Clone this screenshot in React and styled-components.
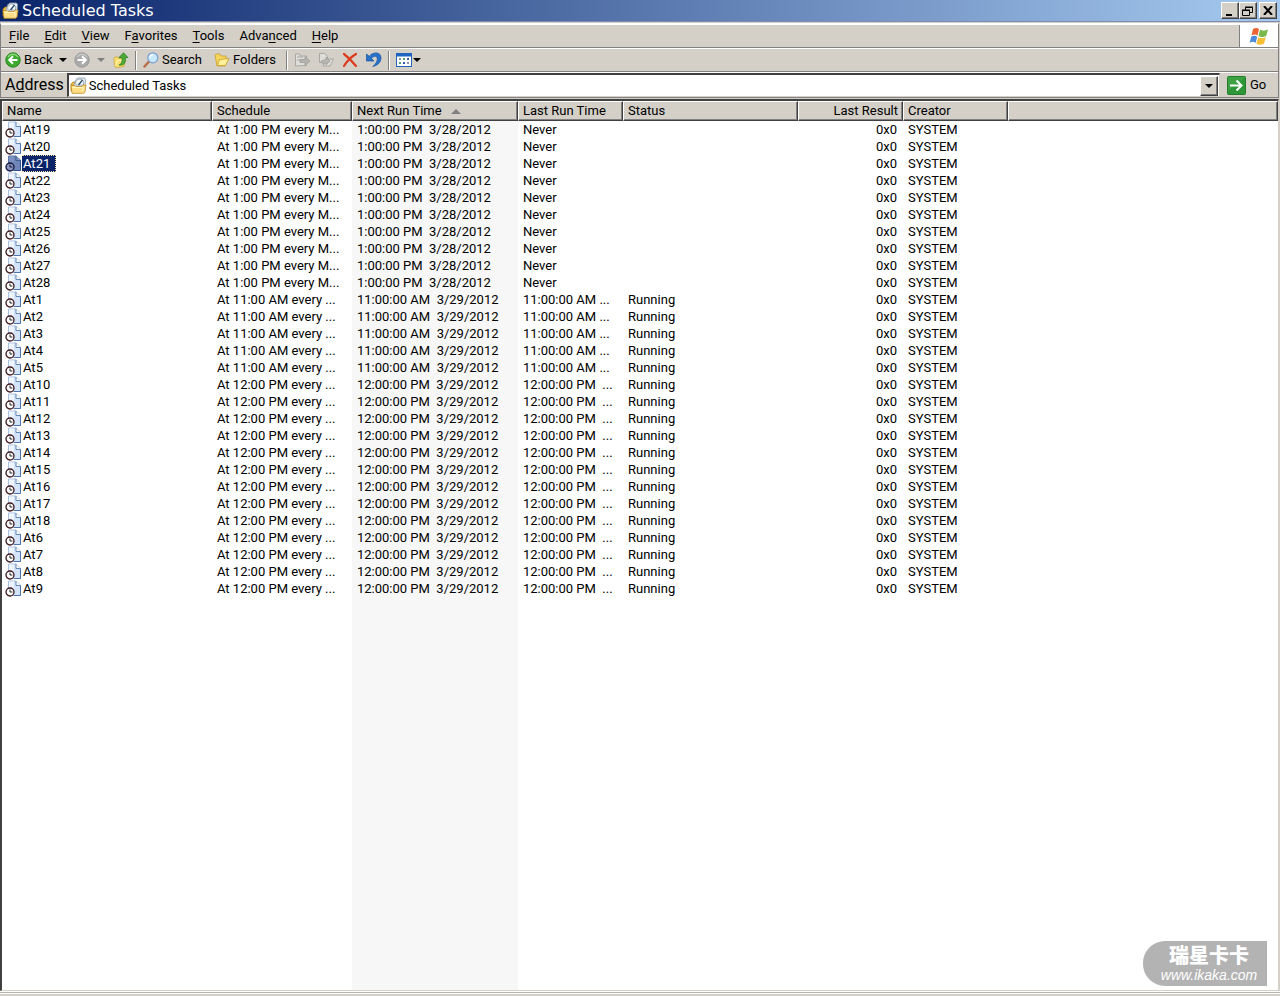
import React, { useState } from 'react';
import styled, { createGlobalStyle } from 'styled-components';

const GlobalStyle = createGlobalStyle`
  * { box-sizing: border-box; }
  body { margin: 0; background: #d4d0c8; color: #000; font: 13px/16px Roboto, "Liberation Sans", sans-serif; }
  button, input { font: inherit; color: inherit; }
  button { cursor: default; }
  svg { flex-shrink: 0; }
`;

const Window = styled.div`
  min-height: 100vh;
  display: flex;
  flex-direction: column;
`;

const TitleBar = styled.header`
  height: 22px;
  display: flex;
  align-items: center;
  gap: 3px;
  padding: 0 3px 0 2px;
  background: linear-gradient(90deg, #0a246a, #a6caf0);
  border-bottom: 1px solid #808cb0;
`;

const Title = styled.h1`
  flex: 1;
  margin: 0;
  color: #fff;
  font: 16px/20px "DejaVu Sans", sans-serif;
`;

const Captions = styled.div`
  display: flex;
`;

const CaptionButton = styled.button`
  width: 18px;
  height: 17px;
  padding: 0;
  display: grid;
  place-items: center;
  background: #d4d0c8;
  border: 1px solid;
  border-color: #fff #404040 #404040 #fff;
  box-shadow: inset -1px -1px #808080;
  margin-left: ${(p) => (p.$apart ? 2 : 0)}px;
`;

const Bars = styled.div`
  margin: 1px 1px 0 0;
  border: 1px solid #808080;
  border-top-color: #fff;
  border-bottom: 0;
`;

const Bar = styled.div`
  height: ${(p) => p.$height}px;
  display: flex;
  align-items: center;
  border-top: 1px solid #fff;
  border-bottom: 1px solid #808080;
`;

const MenuList = styled.nav`
  flex: 1;
  display: flex;
`;

const MenuButton = styled.button`
  padding: 0 7px 0 8px;
  border: 0;
  background: none;
  u { text-underline-offset: 2px; }
`;

const Brand = styled.div`
  align-self: stretch;
  width: 39px;
  display: grid;
  place-items: center;
  background: #fff;
  border-left: 1px solid #808080;
`;

const ToolButton = styled.button`
  display: flex;
  align-items: center;
  justify-content: ${(p) => (p.$label ? 'flex-start' : 'center')};
  gap: ${(p) => (p.$tight ? 1 : 3)}px;
  width: ${(p) => p.$width}px;
  height: 22px;
  padding: 0 ${(p) => (p.$label ? 4 : 0)}px;
  border: 0;
  background: none;
  white-space: nowrap;
`;

const Separator = styled.span`
  width: 2px;
  height: 19px;
  margin: 0 2px;
  border-left: 1px solid #808080;
  border-right: 1px solid #fff;
`;

const AddressLabel = styled.label`
  padding: 0 3px 0 4px;
  font-size: 16px;
`;

const AddressBox = styled.div`
  flex: 1;
  height: 24px;
  display: flex;
  align-items: center;
  padding: 0 1px;
  background: #fff;
  border: 1px solid #d4d0c8;
  border-top: 2px solid #404040;
  border-left: 2px solid #404040;
`;

const AddressInput = styled.input`
  flex: 1;
  min-width: 0;
  padding: 0 2px;
  border: 0;
  outline: 0;
  background: none;
`;

const DropButton = styled(CaptionButton)`
  height: 20px;
`;

const GoButton = styled.button`
  display: flex;
  align-items: center;
  gap: 4px;
  width: 58px;
  padding: 0 0 0 7px;
  border: 0;
  background: none;
`;

const ListView = styled.main`
  flex: 1;
  margin: 1px 1px 0 0;
  border: 1px solid #d4d0c8;
  border-top: 2px solid #404040;
  border-left: 2px solid #404040;
  background: linear-gradient(#f7f7f7, #f7f7f7) 350px 0 / 166px 100% no-repeat #fff;
`;

const FootLine = styled.div`
  height: 5px;
  border-top: 1px solid #fff;
  box-shadow: inset 0 1px #b8b5ae, inset 0 2px #fff;
`;

const Table = styled.table`
  width: 100%;
  table-layout: fixed;
  border-collapse: separate;
  border-spacing: 0;
`;

const Column = styled.col`
  width: ${(p) => (p.$width ? `${p.$width}px` : 'auto')};
`;

const HeadCell = styled.th`
  height: 20px;
  padding: 0;
  font-weight: 400;
  background: #d4d0c8;
  border: 1px solid;
  border-color: #fff #404040 #404040 #fff;
  box-shadow: inset -1px -1px #808080;
`;

const HeadButton = styled.button`
  display: flex;
  align-items: center;
  justify-content: ${(p) => (p.$right ? 'flex-end' : 'flex-start')};
  gap: 9px;
  width: 100%;
  padding: 0 4px;
  border: 0;
  background: none;
  white-space: nowrap;
`;

const Cell = styled.td`
  height: 17px;
  padding: 0 6px 0 5px;
  line-height: 17px;
  white-space: pre;
  overflow: hidden;
  text-align: ${(p) => (p.$right ? 'right' : 'left')};
`;

const NameCell = styled(Cell)`
  padding: 0 3px;
`;

const TaskName = styled.span`
  display: flex;
  align-items: center;
  height: 17px;
`;

const TaskLabel = styled.span`
  padding: 0 5px 0 1px;
  margin-left: 1px;
  line-height: 15px;
  border: 1px dotted ${(p) => (p.$selected ? '#f5db95' : 'transparent')};
  border-left-width: 0;
  background: ${(p) => (p.$selected ? '#0a246a' : 'transparent')};
  color: ${(p) => (p.$selected ? '#fff' : '#000')};
`;

const Watermark = styled.aside`
  position: absolute;
  right: 13px;
  bottom: 10px;
  width: 124px;
  height: 45px;
  padding: 2px 9px 0 17px;
  background: #b3b3b3;
  border-radius: 22px 0 0 22px;
  color: #fff;
  text-align: center;
  font: italic 14px/16px "Liberation Sans", sans-serif;
`;

const WatermarkName = styled.strong`
  display: block;
  font: 900 20px/24px "Noto Sans CJK SC", sans-serif;
`;

const Page = styled.div`
  position: relative;
`;

const Caret = ({ color = '#000' }) => (
  <svg width="8" height="4" viewBox="0 0 8 4" aria-hidden="true"><path d="M0 0h8L4 4z" fill={color} /></svg>
);

const TasksIcon = () => (
  <svg width="17" height="17" viewBox="0 0 17 17" aria-hidden="true">
    <path d="M1 7l2-2h3v9H1z" fill="#e9b93b" stroke="#a77716" strokeWidth=".7" />
    <path d="M3.5 9 6 2.5 8 1h6.5l1 1.5L15 10H4z" fill="#e4edf5" stroke="#8a96a8" strokeWidth=".8" />
    <path d="M6 8a4 4 0 0 1 7.5-3.5V8z" fill="#f8fcff" stroke="#7d93a8" strokeWidth=".7" />
    <path d="M8.5 8l4-5" stroke="#284969" strokeWidth="1.3" fill="none" />
    <path d="M1 8.5h4l1 1h6l1-1.5h3l-1 7-1.5 1.3H2z" fill="#ffdf86" stroke="#c08a20" strokeWidth=".8" />
    <path d="M2.5 10.5H13v4" stroke="#fff5c8" fill="none" />
  </svg>
);

const RoundArrow = ({ forward }) => (
  <svg width="16" height="16" viewBox="0 0 16 16" aria-hidden="true">
    <circle cx="8" cy="8" r="7.2" fill={forward ? '#aaa' : '#3ca82e'} stroke={forward ? '#999' : '#278520'} />
    <path d="M3 5a6 6 0 0 1 10 0" fill="none" stroke={forward ? '#c8c8c8' : '#8bd77b'} strokeWidth="1.5" />
    <path d={forward ? 'M3.5 8h8M8 4.2 11.8 8 8 11.8' : 'M12.5 8h-8M8 4.2 4.2 8 8 11.8'} fill="none" stroke="#fff" strokeWidth="2" />
  </svg>
);

const UpIcon = () => (
  <svg width="16" height="16" viewBox="0 0 16 16" aria-hidden="true">
    <path d="M1 6.5L2 5h3l1 1.5h5l1 1-1 7-7 1-2.5-1z" fill="#f8df70" stroke="#cda437" strokeWidth=".8" />
    <path d="M2 14l2.5-5.5H12" fill="none" stroke="#fff4b5" />
    <path d="M6 13c3-1.5 3.5-4 3-7.5H6L10.5.7 15 5.5h-2.7c.7 5-1 8.5-6.3 7.5z" fill="#4cac35" stroke="#227b18" strokeWidth=".7" />
  </svg>
);

const SearchIcon = () => (
  <svg width="16" height="16" viewBox="0 0 16 16" aria-hidden="true">
    <path d="M1.5 14.5 6 9.5" stroke="#b86b45" strokeWidth="2.4" strokeLinecap="round" />
    <circle cx="9.8" cy="5.8" r="5" fill="#c9e9fb" stroke="#7c9dd0" strokeWidth="1.2" />
    <path d="M7 5.5c0-2 1.5-2.6 3-2.5" fill="none" stroke="#fff" strokeWidth="1.5" />
  </svg>
);

const FolderIcon = () => (
  <svg width="16" height="16" viewBox="0 0 16 16" aria-hidden="true">
    <path d="M1 3l1-1h4l1 2h5v3h2l-3 7H3z" fill="#f5d65d" stroke="#c9a030" strokeWidth=".8" />
    <path d="M3.5 13.5l2-6 9.5-1-3.5 7z" fill="#fff09a" stroke="#c79e27" strokeWidth=".8" />
  </svg>
);

const SendIcon = ({ copy }) => (
  <svg width="17" height="16" viewBox="0 0 17 16" aria-hidden="true">
    {copy ? (
      <g fill="#deddda" stroke="#a3a19c" strokeWidth=".9">
        <path d="M1.5 1.5h5l3 3v6h-8zM8 7h7.5L12 14H5z" />
        <path d="M3 9c1 3 3 3 5 2v2l4-4-4-4v2.5C6 8.5 5 8 3 9z" fill="#b8b6b2" />
      </g>
    ) : (
      <g fill="#deddda" stroke="#a3a19c" strokeWidth=".9">
        <path d="M1.5 14V2h4l1 2h6v9.5zM3 5h6M3 8h5" />
        <path d="M6 7.5h5v-3L16 9l-5 4.5v-3H6z" fill="#b5b3af" />
      </g>
    )}
  </svg>
);

const DeleteIcon = () => (
  <svg width="16" height="16" viewBox="0 0 16 16" aria-hidden="true">
    <path d="M2 2c4 3 8 7 12 12M14 2C9 5 5 9 2 14" fill="none" stroke="#dc3c1e" strokeWidth="2.2" strokeLinecap="round" />
  </svg>
);

const UndoIcon = () => (
  <svg width="16" height="16" viewBox="0 0 16 16" aria-hidden="true">
    <path d="M.5 2v7H8L5.5 6.5C8 3.5 11.3 3.5 11.3 7c0 2.5-1.8 5-4.5 7.5 5-1 8.2-4.5 8.2-8.5C15-.5 7-.5 3.2 4.3z" fill="#2871c9" stroke="#1755a4" strokeWidth=".7" />
  </svg>
);

const ViewsIcon = () => (
  <svg width="16" height="14" viewBox="0 0 16 14" aria-hidden="true">
    <rect x=".5" y=".5" width="15" height="13" fill="#fff" stroke="#2465b5" />
    <path d="M0 0h16v3.5H0z" fill="#1d65c0" />
    <path d="M3 5h2v2H3zM11 9h2v2h-2z" fill="#8c96a8" />
    <path d="M7 5h2v2H7zM3 9h2v2H3z" fill="#4c9e70" />
    <path d="M11 5h2v2h-2zM7 9h2v2H7z" fill="#335ba8" />
  </svg>
);

const FlagIcon = () => (
  <svg width="20" height="19" viewBox="0 0 20 19" aria-hidden="true">
    <path d="M4 2c2-1.5 4-1.5 6 0L8.5 8.5c-2-1.5-4-1.3-6 0z" fill="#ed6434" />
    <path d="M11 2.5c2 1.5 5 1.5 8 0L17.2 9c-3 1.5-5.5 1.5-7.7 0z" fill="#79b94b" />
    <path d="M2.2 9.7c2-1.4 4-1.4 6 0L6.6 16c-2-1.6-4-1.4-6 0z" fill="#4b89dd" />
    <path d="M9.2 10.2c2.5 1.5 5 1.5 7.6 0L15 16.7c-3 1.5-5.5 1.5-7.6 0z" fill="#f6bd35" />
  </svg>
);

const GoIcon = () => (
  <svg width="19" height="19" viewBox="0 0 19 19" aria-hidden="true">
    <rect x=".5" y=".5" width="18" height="18" rx="1" fill="#2d9638" stroke="#237e2c" />
    <path d="M1 1h17L1 15z" fill="#58b35a" opacity=".4" />
    <path d="M3 9.5h12M9.5 4.5l5 5-5 5" fill="none" stroke="#fff" strokeWidth="2" />
  </svg>
);

const JobIcon = ({ selected }) => (
  <svg width="16" height="17" viewBox="0 0 16 17" aria-hidden="true">
    <path d="M3.5 1H11l4.5 4v10.5h-12z" fill={selected ? '#6f86b8' : '#d3e3f9'} stroke={selected ? '#5d76aa' : '#a9c0e2'} />
    <path d="M4 1.5h5v6H4z" fill={selected ? '#7d92c0' : '#eef5ff'} />
    <path d="M11 1v4.5h4.5" fill={selected ? '#8299c3' : '#fff'} stroke={selected ? '#435b91' : '#6587b5'} />
    <path d="M15.5 5.5v10H9" fill="none" stroke={selected ? '#304c89' : '#4c74ae'} />
    <circle cx="5" cy="12" r="4" fill={selected ? '#8a96c0' : '#fff'} stroke={selected ? '#15183f' : '#3c171b'} strokeWidth="1.3" />
    <path d="M5 9.5V12h2.4" fill="none" stroke={selected ? '#15183f' : '#222'} />
  </svg>
);

const menus = [['', 'F', 'ile'], ['', 'E', 'dit'], ['', 'V', 'iew'], ['F', 'a', 'vorites'], ['', 'T', 'ools'], ['Adva', 'n', 'ced'], ['', 'H', 'elp']];

const columns = [
  { title: 'Name', width: 210 },
  { title: 'Schedule', width: 140 },
  { title: 'Next Run Time', width: 166, sorted: true },
  { title: 'Last Run Time', width: 105 },
  { title: 'Status', width: 175 },
  { title: 'Last Result', width: 105, right: true },
  { title: 'Creator', width: 105 },
];

const groups = [
  { ids: [19, 20, 21, 22, 23, 24, 25, 26, 27, 28], cells: ['At 1:00 PM every M...', '1:00:00 PM  3/28/2012', 'Never', ''] },
  { ids: [1, 2, 3, 4, 5], cells: ['At 11:00 AM every ...', '11:00:00 AM  3/29/2012', '11:00:00 AM ...', 'Running'] },
  { ids: [10, 11, 12, 13, 14, 15, 16, 17, 18, 6, 7, 8, 9], cells: ['At 12:00 PM every ...', '12:00:00 PM  3/29/2012', '12:00:00 PM  ...', 'Running'] },
];
const tasks = groups.flatMap((g) => g.ids.map((id) => ({ name: `At${id}`, cells: g.cells })));

export default function App() {
  const [selected, setSelected] = useState('At21');
  return (
    <Page>
      <GlobalStyle />
      <Window>
        <TitleBar>
          <TasksIcon />
          <Title>Scheduled Tasks</Title>
          <Captions>
            <CaptionButton aria-label="Minimize">
              <svg width="10" height="10"><path d="M1 8h6v2H1z" /></svg>
            </CaptionButton>
            <CaptionButton aria-label="Restore">
              <svg width="12" height="10"><path d="M3.5 4V1.5h7v5H8M3 1h8M.5 4.5h7v5h-7zM0 4h8" fill="none" stroke="#000" /></svg>
            </CaptionButton>
            <CaptionButton $apart aria-label="Close">
              <svg width="10" height="9"><path d="M1 0l8 9M9 0L1 9" stroke="#000" strokeWidth="2" /></svg>
            </CaptionButton>
          </Captions>
        </TitleBar>
        <Bars>
          <Bar $height={24}>
            <MenuList>
              {menus.map(([before, key, after]) => (
                <MenuButton key={before + key + after}>{before}<u>{key}</u>{after}</MenuButton>
              ))}
            </MenuList>
            <Brand><FlagIcon /></Brand>
          </Bar>
          <Bar $height={24}>
            <ToolButton $width={54} $label><RoundArrow />Back</ToolButton>
            <ToolButton $width={16} aria-label="Back history"><Caret /></ToolButton>
            <ToolButton $width={22} aria-label="Forward"><RoundArrow forward /></ToolButton>
            <ToolButton $width={16} aria-label="Forward history"><Caret color="#808080" /></ToolButton>
            <ToolButton $width={24} aria-label="Up"><UpIcon /></ToolButton>
            <Separator />
            <ToolButton $width={71} $label><SearchIcon />Search</ToolButton>
            <ToolButton $width={74} $label><FolderIcon />Folders</ToolButton>
            <Separator />
            <ToolButton $width={24} aria-label="Move to"><SendIcon /></ToolButton>
            <ToolButton $width={24} aria-label="Copy to"><SendIcon copy /></ToolButton>
            <ToolButton $width={24} aria-label="Delete"><DeleteIcon /></ToolButton>
            <ToolButton $width={24} aria-label="Undo"><UndoIcon /></ToolButton>
            <Separator />
            <ToolButton $width={36} $label $tight aria-label="Views"><ViewsIcon /><Caret /></ToolButton>
          </Bar>
          <Bar $height={26}>
            <AddressLabel htmlFor="address">A<u>d</u>dress</AddressLabel>
            <AddressBox>
              <TasksIcon />
              <AddressInput id="address" defaultValue="Scheduled Tasks" />
              <DropButton aria-label="Show addresses"><Caret /></DropButton>
            </AddressBox>
            <GoButton><GoIcon />Go</GoButton>
          </Bar>
        </Bars>
        <ListView>
          <Table>
            <colgroup>
              {columns.map((c) => <Column key={c.title} $width={c.width} />)}
              <Column />
            </colgroup>
            <thead>
              <tr>
                {columns.map((c) => (
                  <HeadCell key={c.title} scope="col">
                    <HeadButton $right={c.right}>
                      {c.title}
                      {c.sorted && <svg width="10" height="5"><path d="M0 5l5-5 5 5z" fill="#808080" /></svg>}
                    </HeadButton>
                  </HeadCell>
                ))}
                <HeadCell as="td" />
              </tr>
            </thead>
            <tbody>
              {tasks.map(({ name, cells }) => (
                <tr key={name} onClick={() => setSelected(name)}>
                  <NameCell>
                    <TaskName>
                      <JobIcon selected={name === selected} />
                      <TaskLabel $selected={name === selected}>{name}</TaskLabel>
                    </TaskName>
                  </NameCell>
                  {cells.map((text, i) => <Cell key={i}>{text}</Cell>)}
                  <Cell $right>0x0</Cell>
                  <Cell>SYSTEM</Cell>
                  <Cell />
                </tr>
              ))}
            </tbody>
          </Table>
        </ListView>
        <FootLine />
      </Window>
      <Watermark>
        <WatermarkName lang="zh-CN">瑞星卡卡</WatermarkName>
        www.ikaka.com
      </Watermark>
    </Page>
  );
}
